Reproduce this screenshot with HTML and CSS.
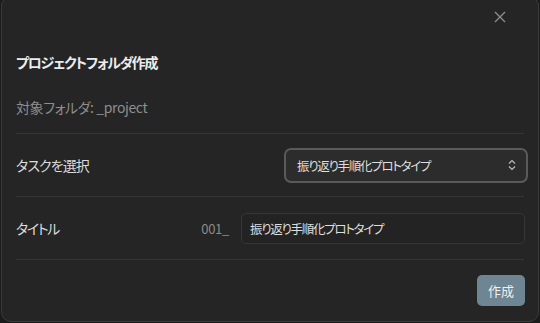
FILE: index.html
```html
<!DOCTYPE html>
<html lang="ja">
<head>
<meta charset="utf-8">
<link rel="stylesheet" href="styles.css">
</head>
<body>
<div class="modal">
  <button class="close" aria-label="close">
    <svg width="12" height="12" viewBox="0 0 12 12"><path d="M1 1L11 11M11 1L1 11" stroke="#8c8c8c" stroke-width="1.4" fill="none"/></svg>
  </button>
  <h1 class="title">プロジェクトフォルダ作成</h1>
  <p class="target">対象フォルダ: _project</p>
  <div class="sep"></div>
  <div class="row">
    <span class="label">タスクを選択</span>
    <div class="select">
      <span class="select-text">振り返り手順化プロトタイプ</span>
      <svg class="chev" width="8" height="12" viewBox="0 0 8 12"><path d="M1 4.5L4 1.5L7 4.5M1 7.5L4 10.5L7 7.5" stroke="#bbbbbb" stroke-width="1.2" fill="none"/></svg>
    </div>
  </div>
  <div class="sep"></div>
  <div class="row">
    <span class="label label-short">タイトル</span>
    <div class="field">
      <span class="prefix">001_</span>
      <div class="input">振り返り手順化プロトタイプ</div>
    </div>
  </div>
  <div class="sep"></div>
  <div class="footer">
    <button class="primary">作成</button>
  </div>
</div>
</body>
</html>
```
FILE: styles.css
```css
* { box-sizing: border-box; }
html, body { margin: 0; padding: 0; }
body {
  background: #1b1b1b;
  width: 540px;
  height: 323px;
  overflow: hidden;
  font-family: "Noto Sans CJK JP", "Noto Sans", sans-serif;
  font-feature-settings: "palt";
}
.modal {
  position: relative;
  margin: -4px 1px 0 1px;
  height: 326px;
  border: 1px solid #3a3a3a;
  border-radius: 10px;
  background: #252525;
  padding: 55px 14px 0 14px;
}
.close {
  position: absolute;
  top: 14px;
  right: 32px;
  width: 12px;
  height: 12px;
  padding: 0;
  border: 0;
  background: none;
  display: flex;
}
.title {
  margin: 0;
  font-size: 14px;
  line-height: 20px;
  font-weight: 700;
  color: #ececec;
  letter-spacing: -1.3px;
}
.target {
  margin: 25px 0 0 0;
  font-size: 14px;
  line-height: 20px;
  color: #8e8e8e;
  letter-spacing: -0.4px;
}
.sep {
  height: 1px;
  background: #363636;
  margin-top: 16px;
}
.row + .sep { margin-top: 0; }
.row {
  height: 62px;
  display: flex;
  align-items: center;
  justify-content: space-between;
}
.label {
  font-size: 14px;
  color: #dcdcdc;
  letter-spacing: -0.9px;
}
.label-short { letter-spacing: -1.4px; }
.select {
  width: 244px;
  height: 35px;
  margin-right: -4px;
  border: 2px solid #5a5a5a;
  border-radius: 7px;
  background: #2c2c2c;
  display: flex;
  align-items: center;
  justify-content: space-between;
  padding: 0 10px 0 11px;
}
.select-text {
  font-size: 12.5px;
  color: #dedede;
  letter-spacing: -1.3px;
}
.field {
  display: flex;
  align-items: center;
  gap: 12px;
}
.prefix {
  font-size: 13px;
  color: #8a8a8a;
  letter-spacing: -0.3px;
}
.input {
  width: 284px;
  height: 31px;
  margin-right: -1px;
  border: 1px solid #363636;
  border-radius: 5px;
  background: #232323;
  font-size: 12.5px;
  line-height: 29px;
  padding-left: 8px;
  color: #dedede;
  letter-spacing: -1.3px;
}
.footer {
  display: flex;
  justify-content: flex-end;
  padding-top: 15px;
}
.primary {
  width: 48px;
  height: 31px;
  margin-right: -1px;
  border: 0;
  border-radius: 5px;
  background: #6e8593;
  color: #f0f0f0;
  font-family: "Noto Sans CJK JP", sans-serif;
  font-size: 13px;
  padding: 0;
}
```
